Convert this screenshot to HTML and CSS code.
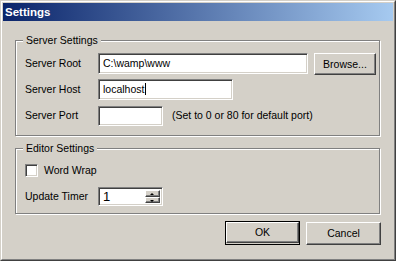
FILE: index.html
```html
<!DOCTYPE html>
<html lang="en">
<head>
    <meta charset="UTF-8">
    <title>Settings</title>
    <link rel="stylesheet" href="styles.css">
</head>
<body>
<div class="window">
    <div class="frame">
        <div class="titlebar">Settings</div>

        <div class="content">
            <div class="group server">
                <span class="legend">Server Settings</span>
                <div class="row">
                    <span class="label">Server Root</span>
                    <div class="field root">C:\wamp\www</div>
                    <div class="button browse">Browse...</div>
                </div>
                <div class="row">
                    <span class="label">Server Host</span>
                    <div class="field host"><span class="caret">localhost</span></div>
                </div>
                <div class="row">
                    <span class="label">Server Port</span>
                    <div class="field port"></div>
                    <span class="note">(Set to 0 or 80 for default port)</span>
                </div>
            </div>

            <div class="group editor">
                <span class="legend">Editor Settings</span>
                <div class="row check-row">
                    <span class="checkbox"></span>
                    <span>Word Wrap</span>
                </div>
                <div class="row">
                    <span class="label">Update Timer</span>
                    <div class="field spin">
                        <span class="spin-value">1</span>
                        <span class="spin-buttons">
                            <span class="spin-btn up"></span>
                            <span class="spin-btn down"></span>
                        </span>
                    </div>
                </div>
            </div>

            <div class="actions">
                <div class="default">
                    <div class="button">OK</div>
                </div>
                <div class="button">Cancel</div>
            </div>
        </div>
    </div>
</div>
</body>
</html>
```

FILE: styles.css
```css
body {
    margin: 0;
    font: normal 10.5px/13px "Liberation Sans", Arial, sans-serif;
    color: #000;
    background: #D4D0C8;
}
.window {
    width: 396px;
    height: 261px;
    box-sizing: border-box;
    border: 1px solid;
    border-color: #D4D0C8 #404040 #404040 #D4D0C8;
    background: #D4D0C8;
}
.frame {
    height: 100%;
    box-sizing: border-box;
    border: 1px solid;
    border-color: #fff #808080 #808080 #fff;
    padding: 1px;
}
.titlebar {
    height: 18px;
    line-height: 18px;
    padding-left: 2px;
    color: #fff;
    font-weight: bold;
    font-size: 11.5px;
    background: linear-gradient(to right, #0A246A, #A6CAF0);
}
.content {
    padding: 19px 13px 0 12px;
}
.group {
    position: relative;
    box-sizing: border-box;
    border: 1px solid #808080;
    box-shadow: 1px 1px 0 #fff, inset 1px 1px 0 #fff;
    padding: 12px 3px 0 9px;
}
.group.server {
    height: 96px;
}
.group.editor {
    height: 66px;
    margin-top: 12px;
    padding-top: 14px;
}
.legend {
    position: absolute;
    top: -7px;
    left: 7px;
    padding: 0 3px 0 3px;
    background: #D4D0C8;
}
.row {
    display: flex;
    align-items: center;
    height: 21px;
    margin-bottom: 5px;
}
.label {
    width: 73px;
    flex: none;
}
.field {
    flex: none;
    box-sizing: border-box;
    height: 21px;
    padding: 3px 3px 0 4px;
    background: #fff;
    border: 1px solid;
    border-color: #808080 #fff #fff #808080;
    box-shadow: inset 1px 1px 0 #404040, inset -1px -1px 0 #D4D0C8;
}
.field.root {
    width: 210px;
}
.field.host {
    width: 135px;
}
.field.port {
    width: 65px;
    height: 20px;
}
.caret {
    border-right: 1px solid #000;
    padding-right: 1px;
}
.note {
    margin-left: 9px;
}
.button {
    flex: none;
    box-sizing: border-box;
    width: 75px;
    height: 23px;
    line-height: 20px;
    text-align: center;
    border: 1px solid;
    border-color: #fff #404040 #404040 #fff;
    box-shadow: inset -1px -1px 0 #808080;
    background: #D4D0C8;
}
.button.browse {
    width: 62px;
    height: 22px;
    margin-left: 6px;
}
.check-row {
    height: 14px;
    margin-bottom: 9px;
}
.checkbox {
    box-sizing: border-box;
    width: 13px;
    height: 13px;
    margin-right: 6px;
    background: #fff;
    border: 1px solid;
    border-color: #808080 #fff #fff #808080;
    box-shadow: inset 1px 1px 0 #404040, inset -1px -1px 0 #D4D0C8;
}
.field.spin {
    display: flex;
    justify-content: space-between;
    width: 65px;
    height: 19px;
    padding: 2px 2px 2px 4px;
}
.spin-value {
    font-size: 13px;
    line-height: 14px;
}
.spin-buttons {
    display: flex;
    flex-direction: column;
    width: 15px;
}
.spin-btn {
    position: relative;
    flex: 1;
    box-sizing: border-box;
    border: 1px solid;
    border-color: #fff #404040 #404040 #fff;
    box-shadow: inset -1px -1px 0 #808080;
    background: #D4D0C8;
}
.spin-btn::after {
    content: "";
    position: absolute;
    left: 4px;
    top: 2px;
    border-left: 2px solid transparent;
    border-right: 2px solid transparent;
}
.spin-btn.up::after {
    border-bottom: 2px solid #000;
}
.spin-btn.down::after {
    border-top: 2px solid #000;
}
.actions {
    display: flex;
    justify-content: flex-end;
    gap: 6px;
    margin-top: 8px;
    margin-right: -1px;
}
.default {
    border: 1px solid #000;
    margin-top: -1px;
}
.default .button {
    width: 73px;
    height: 21px;
    line-height: 18px;
}
```
